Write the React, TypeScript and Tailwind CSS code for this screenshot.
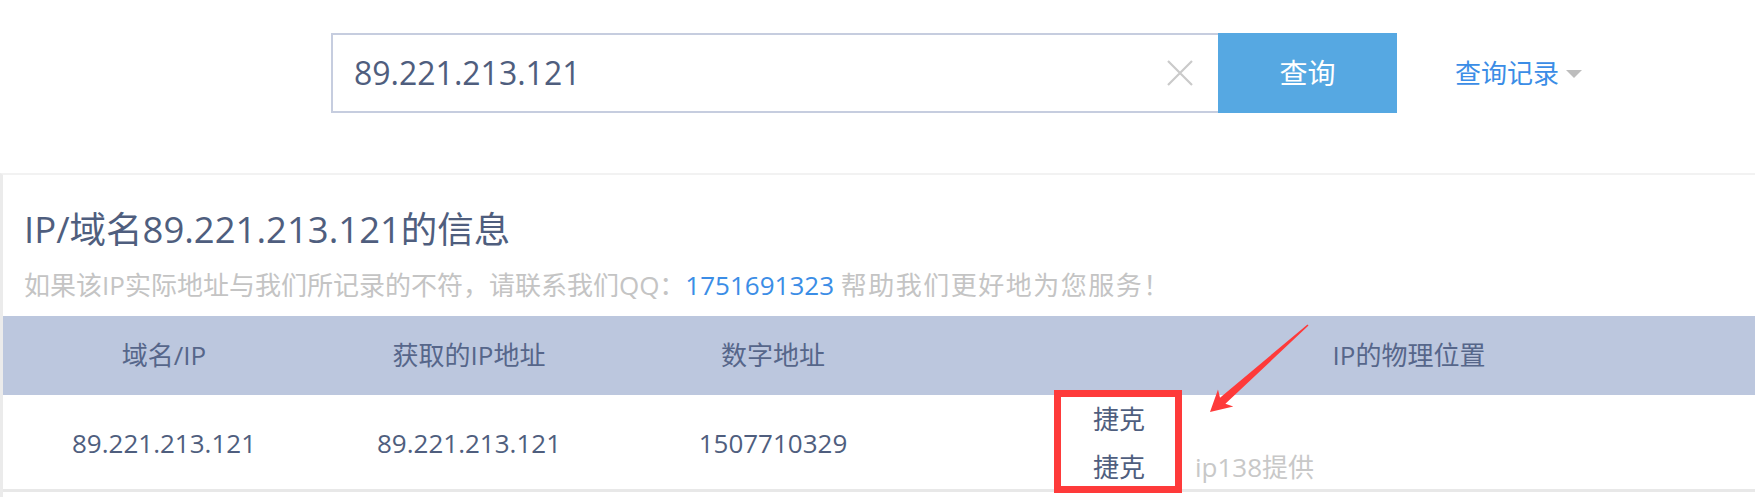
import React from 'react';

const ClearIcon = () => (
  <svg width="26" height="26" viewBox="0 0 26 26" className="shrink-0">
    <path d="M1 1 L25 25 M25 1 L1 25" stroke="#cacaca" strokeWidth="2.2" fill="none" />
  </svg>
);

const Caret = () => (
  <svg width="16" height="9" viewBox="0 0 16 9" className="ml-[7px] mt-[2px]">
    <polygon points="0,0 16,0 8,8" fill="#bdbdbd" />
  </svg>
);

const columns = [
  { head: '域名/IP', value: '89.221.213.121' },
  { head: '获取的IP地址', value: '89.221.213.121' },
  { head: '数字地址', value: '1507710329' },
];

const App = () => {
  return (
    <div className="relative w-[1755px] h-[497px] overflow-hidden bg-white font-['Open_Sans','Noto_Sans_CJK_SC',sans-serif]">
      {/* Search bar */}
      <div className="h-[173px] pt-[33px] pl-[331px] flex items-start">
        <div className="flex h-[80px]">
          <div className="w-[887px] h-full border-2 border-r-0 border-[#c6cddf] flex items-center pl-[21px] pr-[25px]">
            <input
              readOnly
              value="89.221.213.121"
              className="flex-1 min-w-0 bg-transparent outline-none text-[32px] leading-[40px] text-[#4f5e7e]"
            />
            <ClearIcon />
          </div>
          <button className="w-[179px] h-full bg-[#56a8e2] text-white text-[28px] leading-none">
            查询
          </button>
        </div>
        <div className="ml-[58px] h-[80px] flex items-center text-[26px] text-[#3b8de6]">
          查询记录
          <Caret />
        </div>
      </div>

      {/* Result panel */}
      <div className="border-t-2 border-l-[3px] border-t-[#f2f2f2] border-l-[#ebebeb] h-[324px]">
        <div className="pl-[21px] pt-[36px]">
          <h1 className="text-[36.5px] leading-[36px] text-[#4f5e7e]">IP/域名89.221.213.121的信息</h1>
          <p className="mt-[25px] text-[26px] leading-[26px] text-[#c4c4c4]">
            如果该IP实际地址与我们所记录的不符，请联系我们QQ：
            <span className="text-[#3b8de6]">1751691323</span>{' '}
            <span className="tracking-[1.5px]">帮助我们更好地为您服务！</span>
          </p>
        </div>

        <div className="mt-[18px] w-[1882px]">
          <div className="grid grid-cols-[322px_288px_320px_952px] h-[79px] bg-[#bcc7de] text-[26px] text-[#56668a]">
            {columns.map((c) => (
              <div key={c.head} className="flex items-center justify-center">{c.head}</div>
            ))}
            <div className="flex items-center justify-center">IP的物理位置</div>
          </div>
          <div className="grid grid-cols-[322px_288px_320px_952px] h-[97px] border-b-[3px] border-[#e8e8e8] text-[26px] text-[#4f5e7e]">
            {columns.map((c) => (
              <div key={c.head} className="flex items-center justify-center">{c.value}</div>
            ))}
            <div className="flex flex-col justify-center pl-[160px] leading-[48px]">
              <div>捷克</div>
              <div className="flex">
                <span>捷克</span>
                <span className="ml-[50px] text-[#c8c8c8]">ip138提供</span>
              </div>
            </div>
          </div>
        </div>
      </div>

      {/* Annotation: red box and arrow */}
      <div className="absolute left-[1054px] top-[390px] w-[128px] h-[103px] border-[7px] border-[#fe3a3a] pointer-events-none" />
      <svg className="absolute left-0 top-0 pointer-events-none" width="1755" height="497">
        <polygon
          points="1210,412 1218,389.6 1220,397.7 1307.5,324.4 1308.5,325.6 1225.4,403.7 1233.3,406.6"
          fill="#fe3a3a"
        />
      </svg>
    </div>
  );
};

export default App;
